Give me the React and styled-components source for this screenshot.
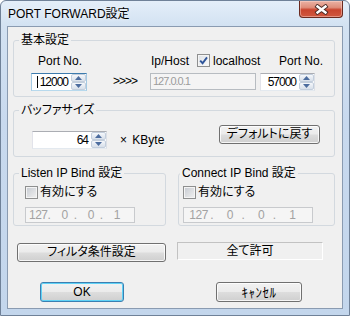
import React from 'react';
import styled, { createGlobalStyle } from 'styled-components';

const FONT = `"Liberation Sans", "Noto Sans CJK JP", sans-serif`;

const Global = createGlobalStyle`
  html, body { margin: 0; padding: 0; background: #ffffff; }
  body { font-family: ${FONT}; font-size: 12px; font-feature-settings: "palt"; color: #000; }
  * { box-sizing: border-box; }
`;

const Window = styled.div`
  width: 350px;
  height: 316px;
  border: 1px solid #6f8198;
  border-radius: 6px 6px 0 0;
  background: linear-gradient(180deg, #e4eef9 0px, #d3e2f2 24px, #c8d9ee 120px, #c3d6ec 100%);
  display: flex;
  flex-direction: column;
`;

const TitleBar = styled.div`
  height: 25px;
  flex: none;
  display: flex;
  justify-content: space-between;
  align-items: flex-start;
`;

const Title = styled.div`
  padding: 6px 0 0 7px;
  line-height: 14px;
  font-size: 12px;
  color: #000;
  text-shadow: 0 0 4px rgba(255, 255, 255, 0.9);
  white-space: nowrap;
`;

const CloseButton = styled.div`
  width: 44px;
  height: 17px;
  margin-right: 6px;
  border: 1px solid #6b2a1f;
  border-top: none;
  border-radius: 0 0 4px 4px;
  background: linear-gradient(180deg, #eab2a4 0%, #df8e7b 40%, #c9452e 55%, #d0583f 100%);
  box-shadow: inset 0 0 0 1px rgba(255, 220, 210, 0.45);
  display: flex;
  align-items: center;
  justify-content: center;
`;

const Client = styled.div`
  flex: 1;
  margin: 0 6px 6px 6px;
  border: 1px solid #8a9bb1;
  background: #f0f0f0;
  padding-left: 5px;
  display: flex;
  flex-direction: column;
`;

const Group = styled.fieldset`
  flex: none;
  width: ${(p) => p.$w}px;
  margin: ${(p) => p.$mt || 0}px 0 0 ${(p) => p.$ml || 0}px;
  padding: 0 0 ${(p) => p.$pb || 0}px 0;
  min-width: 0;
  border: 1px solid #d3d9df;
  border-radius: 3px;
`;

const Legend = styled.legend`
  margin-left: ${(p) => p.$lm || 0}px;
  padding: 0 2px;
  line-height: 12px;
  font-size: 12px;
  white-space: nowrap;
`;

const Row = styled.div`
  display: flex;
  align-items: flex-start;
  margin-top: ${(p) => p.$mt || 0}px;
  margin-left: ${(p) => p.$ml || 0}px;
`;

const Label = styled.span`
  display: block;
  flex: none;
  width: ${(p) => (p.$w ? `${p.$w}px` : 'auto')};
  margin-left: ${(p) => p.$ml || 0}px;
  margin-top: ${(p) => p.$mt || 0}px;
  line-height: ${(p) => p.$lh || 14}px;
  letter-spacing: ${(p) => p.$ls || 0}px;
  word-spacing: ${(p) => p.$ws || 0}px;
  white-space: nowrap;
`;

const SpinFrame = styled.div`
  flex: none;
  display: flex;
  width: ${(p) => p.$w}px;
  height: 18px;
  margin-left: ${(p) => p.$ml || 0}px;
  margin-top: ${(p) => p.$mt || 0}px;
  background: #fff;
  border: 1px solid;
  border-color: ${(p) =>
    p.$focus ? '#3d7bad #a4c9e3 #b7d9ed #a4c9e3' : '#abadb3 #dbdfe6 #e3e9ef #e2e3ea'};
`;

const SpinText = styled.div`
  flex: 1;
  display: flex;
  justify-content: flex-end;
  align-items: center;
  padding-right: 3px;
  line-height: 16px;
  letter-spacing: -1px;
`;

const Caret = styled.span`
  width: 1px;
  height: 12px;
  background: #000;
  margin-right: 2px;
`;

const Spinner = styled.div`
  width: 15px;
  flex: none;
  display: flex;
  flex-direction: column;
`;

const SpinBtn = styled.div`
  flex: 1;
  display: flex;
  align-items: center;
  justify-content: center;
  border: 1px solid #c3cedc;
  border-radius: 2px;
  background: linear-gradient(180deg, #f5f8fc 0%, #e6ebf2 50%, #d8e0ea 100%);
`;

const DisabledEdit = styled.div`
  flex: none;
  width: ${(p) => p.$w}px;
  height: 17px;
  border: 1px solid #b7bcc1;
  background: #f4f4f4;
  color: #9c9c9c;
  padding-left: 2px;
  line-height: 15px;
  font-size: 11px;
  letter-spacing: -1px;
`;

const IpBox = styled.div`
  flex: none;
  display: flex;
  width: ${(p) => p.$w}px;
  height: 16px;
  margin-left: ${(p) => p.$ml || 0}px;
  margin-top: ${(p) => p.$mt || 0}px;
  border: 1px solid #c8cacd;
  background: #f5f5f5;
  color: #a2a2a2;
  padding-left: 3px;
  line-height: 14px;
`;

const IpSeg = styled.div`
  flex: 1;
  display: flex;
`;

const IpNum = styled.span`
  flex: 1;
  text-align: center;
  letter-spacing: -0.5px;
`;

const IpDot = styled.span`
  width: 8px;
  visibility: ${(p) => (p.$hidden ? 'hidden' : 'visible')};
`;

const CheckOuter = styled.div`
  flex: none;
  width: 13px;
  height: 13px;
  margin-left: ${(p) => p.$ml || 0}px;
  border: 1px solid #8e8f8f;
  background: #f4f4f4;
  padding: 1px;
`;

const CheckInner = styled.div`
  width: 9px;
  height: 9px;
  background: ${(p) =>
    p.$checked
      ? 'linear-gradient(135deg, #dfe3e8 0%, #f8f8f8 100%)'
      : 'linear-gradient(135deg, #c9cdd3 0%, #eeeeee 100%)'};
  display: flex;
  align-items: center;
  justify-content: center;
`;

const Button = styled.button`
  flex: none;
  width: ${(p) => p.$w}px;
  height: ${(p) => p.$h || 19}px;
  margin-left: ${(p) => p.$ml || 0}px;
  margin-top: ${(p) => p.$mt || 0}px;
  padding: 0;
  font-family: ${FONT};
  font-size: ${(p) => p.$fs || 12}px;
  font-feature-settings: "palt";
  line-height: 15px;
  letter-spacing: ${(p) => p.$ls || 0}px;
  color: #000;
  border: 1px solid ${(p) => (p.$default ? '#3c7fb1' : '#707070')};
  border-radius: 3px;
  background: linear-gradient(180deg, #f2f2f2 0%, #ebebeb 48%, #dddddd 52%, #cfcfcf 100%);
  box-shadow: inset 0 0 0 1px
    ${(p) => (p.$default ? '#5fd2f6' : 'rgba(255, 255, 255, 0.8)')};
`;

const StaticBox = styled.div`
  flex: none;
  width: ${(p) => p.$w}px;
  height: 18px;
  margin-left: ${(p) => p.$ml || 0}px;
  border: 1px solid;
  border-color: #c2c2c2 #ffffff #ffffff #c2c2c2;
  background: #f0f0f0;
  text-align: center;
  line-height: 16px;
`;

const ArrowUp = () => (
  <svg width="7" height="4" viewBox="0 0 7 4">
    <path d="M0 4 L3.5 0 L7 4 Z" fill="#4c6c9e" />
  </svg>
);

const ArrowDown = () => (
  <svg width="7" height="4" viewBox="0 0 7 4">
    <path d="M0 0 L7 0 L3.5 4 Z" fill="#4c6c9e" />
  </svg>
);

const SpinEdit = ({ w, ml, mt, value, focus, caret }) => (
  <SpinFrame $w={w} $ml={ml} $mt={mt} $focus={focus}>
    <SpinText>
      {caret && <Caret />}
      {value}
    </SpinText>
    <Spinner>
      <SpinBtn>
        <ArrowUp />
      </SpinBtn>
      <SpinBtn>
        <ArrowDown />
      </SpinBtn>
    </Spinner>
  </SpinFrame>
);

const CheckBox = ({ checked, ml }) => (
  <CheckOuter $ml={ml}>
    <CheckInner $checked={checked}>
      {checked && (
        <svg width="9" height="9" viewBox="0 0 9 9">
          <path d="M1.2 4.6 L3.6 7.2 L8 1.4" fill="none" stroke="#2f559a" strokeWidth="1.9" />
        </svg>
      )}
    </CheckInner>
  </CheckOuter>
);

const IpAddress = ({ w, ml, mt }) => (
  <IpBox $w={w} $ml={ml} $mt={mt}>
    {['127', '0', '0', '1'].map((n, i) => (
      <IpSeg key={i}>
        <IpNum>{n}</IpNum>
        <IpDot $hidden={i === 3}>.</IpDot>
      </IpSeg>
    ))}
  </IpBox>
);

export default function App() {
  return (
    <>
      <Global />
      <Window>
        <TitleBar>
          <Title>PORT FORWARD設定</Title>
          <CloseButton>
            <svg width="15" height="11" viewBox="0 0 15 11">
              <path d="M3.5 2.5 L11.5 8.5 M11.5 2.5 L3.5 8.5" stroke="#4a2b26" strokeWidth="4.2" strokeLinecap="square" />
              <path d="M3.5 2.5 L11.5 8.5 M11.5 2.5 L3.5 8.5" stroke="#ffffff" strokeWidth="2.4" strokeLinecap="square" />
            </svg>
          </CloseButton>
        </TitleBar>
        <Client>
          <Group $w={322} $mt={7} $pb={5}>
            <Legend $lm={5}>基本設定</Legend>
            <Row $mt={8}>
              <Label $ml={24} $w={113}>Port No.</Label>
              <Label $w={46}>Ip/Host</Label>
              <CheckBox checked />
              <Label $ml={3} $w={66}>localhost</Label>
              <Label>Port No.</Label>
            </Row>
            <Row $mt={5}>
              <SpinEdit w={56} ml={17} value="12000" focus caret />
              <Label $ml={26} $w={37} $mt={1} $ls={-1}>{'>>>>'}</Label>
              <DisabledEdit $w={106}>127.0.0.1</DisabledEdit>
              <SpinEdit w={55} ml={4} value="57000" />
            </Row>
          </Group>

          <Group $w={322} $mt={7} $pb={7}>
            <Legend $lm={5}>バッファサイズ</Legend>
            <Row $mt={9}>
              <SpinEdit w={75} ml={18} mt={6} value="64" />
              <Label $ml={13} $w={99} $mt={8} $ws={2}>× KByte</Label>
              <Button $w={101}>デフォルトに戻す</Button>
            </Row>
          </Group>

          <Row $mt={10}>
            <Group $w={153} $pb={2}>
              <Legend $lm={5}>Listen IP Bind 設定</Legend>
              <Row $mt={7} $ml={11}>
                <CheckBox />
                <Label $ml={2} $lh={13}>有効にする</Label>
              </Row>
              <IpAddress w={110} ml={11} mt={8} />
            </Group>
            <Group $w={157} $pb={2} $ml={12}>
              <Legend $lm={1}>Connect IP Bind 設定</Legend>
              <Row $mt={7} $ml={4}>
                <CheckBox />
                <Label $ml={2} $lh={13}>有効にする</Label>
              </Row>
              <IpAddress w={130} ml={4} mt={8} />
            </Group>
          </Row>

          <Row $mt={16}>
            <Button $w={149} $ml={4} $mt={1}>フィルタ条件設定</Button>
            <StaticBox $w={146} $ml={11}>全て許可</StaticBox>
          </Row>

          <Row $mt={20}>
            <Button $w={84} $h={20} $ml={27} $default>OK</Button>
            <Button $w={86} $h={20} $ml={92} $fs={13} $ls={0.5}>ｷｬﾝｾﾙ</Button>
          </Row>
        </Client>
      </Window>
    </>
  );
}
